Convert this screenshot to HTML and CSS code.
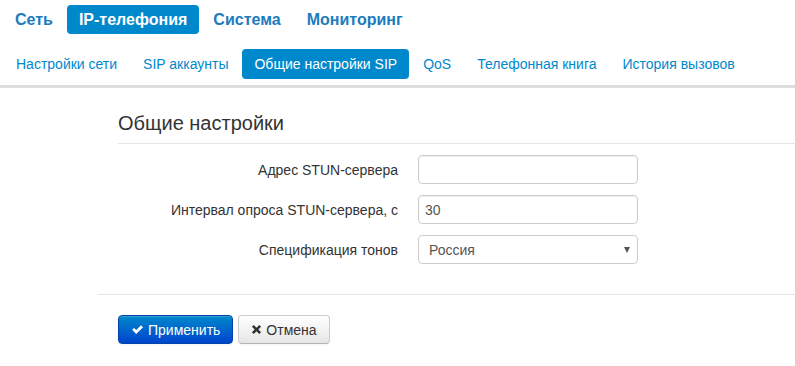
FILE: index.html
```
<!DOCTYPE html>
<html lang="ru">
<head>
<meta charset="utf-8">
<title>Общие настройки SIP</title>
<link rel="stylesheet" href="styles.css">
</head>
<body>
<header class="header">
  <nav class="topnav">
    <a class="topnav-item" href="#">Сеть</a>
    <a class="topnav-item active" href="#">IP-телефония</a>
    <a class="topnav-item" href="#">Система</a>
    <a class="topnav-item" href="#">Мониторинг</a>
  </nav>
  <nav class="subnav">
    <a class="subnav-item" href="#">Настройки сети</a>
    <a class="subnav-item" href="#">SIP аккаунты</a>
    <a class="subnav-item active" href="#">Общие настройки SIP</a>
    <a class="subnav-item" href="#">QoS</a>
    <a class="subnav-item" href="#">Телефонная книга</a>
    <a class="subnav-item" href="#">История вызовов</a>
  </nav>
</header>
<main class="content">
  <form class="form">
    <h2 class="legend">Общие настройки</h2>
    <div class="rows">
      <div class="row">
        <label class="label" for="stun">Адрес STUN-сервера</label>
        <input class="field" id="stun" type="text" value="">
      </div>
      <div class="row">
        <label class="label" for="interval">Интервал опроса STUN-сервера, с</label>
        <input class="field" id="interval" type="text" value="30">
      </div>
      <div class="row">
        <label class="label" for="tones">Спецификация тонов</label>
        <span class="select-wrap">
          <select class="field select" id="tones">
            <option>Россия</option>
          </select>
        </span>
      </div>
    </div>
    <div class="actions">
      <button class="btn btn-primary" type="button">
        <svg class="icon" viewBox="0 0 14 14" width="13" height="13"><path d="M1.2 7.4 L3.4 5.3 L5.6 7.5 L10.8 2.3 L13 4.5 L5.6 11.9 Z" fill="#fff"/></svg>
        Применить
      </button>
      <button class="btn btn-default" type="button">
        <svg class="icon" viewBox="0 0 12 12" width="11" height="11"><path d="M1 3 L3 1 L6 4 L9 1 L11 3 L8 6 L11 9 L9 11 L6 8 L3 11 L1 9 L4 6 Z" fill="#333"/></svg>
        Отмена
      </button>
    </div>
  </form>
</main>
</body>
</html>
```
FILE: styles.css
```
* { box-sizing: border-box; }
html, body { margin: 0; padding: 0; background: #fff; }
body {
  font-family: "Liberation Sans", Arial, sans-serif;
  font-size: 14px;
  line-height: 20px;
  color: #333;
}
.header {
  border-bottom: 3px solid #dddddd;
  padding-bottom: 6px;
}
.topnav {
  display: flex;
  gap: 2px;
  padding: 5px 0 0 3px;
}
.topnav-item {
  display: block;
  padding: 5px 12px 4px;
  font-size: 16px;
  line-height: 20px;
  font-weight: bold;
  color: #1b7cbd;
  text-decoration: none;
  border-radius: 4px;
}
.topnav-item.active {
  background: #0088cc;
  color: #fff;
}
.subnav {
  display: flex;
  gap: 2px;
  padding: 0 0 0 4px;
  margin-top: 15px;
}
.subnav-item {
  display: block;
  padding: 5px 12px;
  font-size: 14px;
  line-height: 20px;
  color: #0088cc;
  text-decoration: none;
  border-radius: 4px;
}
.subnav-item.active {
  background: #0088cc;
  color: #fff;
}
.content {
  padding-left: 98px;
}
.legend {
  margin: 15px 0 0 20px;
  font-size: 20px;
  font-weight: normal;
  line-height: 40px;
  color: #333;
  border-bottom: 1px solid #e5e5e5;
}
.rows {
  display: flex;
  flex-direction: column;
  gap: 11px;
  padding-top: 11px;
}
.row {
  display: grid;
  grid-template-columns: 300px 220px;
  column-gap: 20px;
  align-items: center;
}
.label {
  text-align: right;
  font-size: 14px;
}
.field {
  display: block;
  width: 220px;
  height: 29px;
  padding: 4px 6px;
  font-family: "Liberation Sans", Arial, sans-serif;
  font-size: 14px;
  color: #555;
  background: #fff;
  border: 1px solid #cccccc;
  border-radius: 4px;
  box-shadow: inset 0 1px 1px rgba(0,0,0,0.075);
  outline: none;
}
.select-wrap {
  position: relative;
  display: block;
  width: 220px;
}
.select {
  -webkit-appearance: none;
  appearance: none;
  padding-left: 10px;
  box-shadow: none;
}
.select-wrap::after {
  content: "";
  position: absolute;
  right: 8px;
  top: 12px;
  border-left: 3px solid transparent;
  border-right: 3px solid transparent;
  border-top: 6px solid #555;
}
.actions {
  margin-top: 30px;
  border-top: 1px solid #e5e5e5;
  padding: 20px 20px 20px;
  display: flex;
  gap: 5px;
}
.btn {
  display: inline-flex;
  align-items: center;
  gap: 4px;
  height: 29px;
  padding: 4px 12px;
  font-family: "Liberation Sans", Arial, sans-serif;
  font-size: 14px;
  line-height: 20px;
  border-radius: 4px;
  cursor: pointer;
}
.btn-primary {
  color: #fff;
  background: linear-gradient(to bottom, #0088cc, #0044cc);
  border: 1px solid #0044aa;
  box-shadow: inset 0 1px 0 rgba(255,255,255,0.2), 0 1px 2px rgba(0,0,0,0.05);
}
.btn-default {
  color: #333;
  background: linear-gradient(to bottom, #ffffff, #e6e6e6);
  border: 1px solid #cccccc;
  border-bottom-color: #b3b3b3;
  box-shadow: inset 0 1px 0 rgba(255,255,255,0.2), 0 1px 2px rgba(0,0,0,0.05);
}
.icon { display: block; }
```
